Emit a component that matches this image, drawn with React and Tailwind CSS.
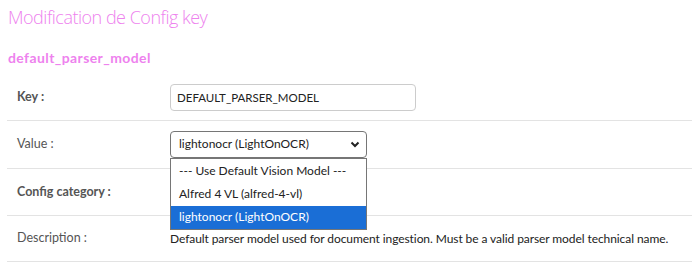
import React from 'react';

const OPTIONS = [
  '--- Use Default Vision Model ---',
  'Alfred 4 VL (alfred-4-vl)',
  'lightonocr (LightOnOCR)',
];

function Row({ label, bold, children, height }) {
  return (
    <div className="flex items-center border-b border-[#e3e3e3]" style={{ height }}>
      <div className={`w-[163px] pl-[10px] text-[12.5px] text-[#555] ${bold ? 'font-bold' : ''}`}>{label}</div>
      <div className="flex-1">{children}</div>
    </div>
  );
}

export default function App() {
  return (
    <div className="w-[692px] h-[273px] bg-white font-['Lato',sans-serif] text-[#222] overflow-hidden">
      <h1 className="pl-[8px] pt-[5px] text-[18px] font-light text-[#ee82ee] leading-[24px] font-['Open_Sans',sans-serif] tracking-[-0.5px]">
        Modification de Config key
      </h1>
      <h2 className="pl-[8px] mt-[20px] text-[14px] font-bold text-[#ee82ee] leading-[18px] tracking-[0.4px]">
        default_parser_model
      </h2>
      <div className="ml-[7px] mt-[8px]">
        <Row label="Key :" bold height={46}>
          <div className="w-[246px] h-[27px] border border-[#ccc] rounded-[4px] px-[6px] flex items-center text-[11.5px] text-[#222]">
            DEFAULT_PARSER_MODEL
          </div>
        </Row>
        <Row label="Value :" height={48}>
          <div className="relative w-[197px] -mt-[1px]">
            <div className="h-[27px] border border-[#767676] rounded-[4px] pl-[8px] pr-[6px] flex items-center justify-between text-[12px] text-[#222]">
              <span>lightonocr (LightOnOCR)</span>
              <svg width="10" height="7" viewBox="0 0 10 7">
                <path d="M1.5 1.5 L5 5 L8.5 1.5" fill="none" stroke="#222" strokeWidth="2" />
              </svg>
            </div>
            <div className="absolute left-0 top-[27px] w-[197px] bg-white border border-[#767676] z-10 text-[12px]">
              {OPTIONS.map((o, i) => (
                <div
                  key={o}
                  className={`pl-[8px] flex items-center ${i === 0 ? 'h-[24px]' : 'h-[23px]'} ${i === 2 ? 'bg-[#1a6ed6] text-white' : 'text-[#222]'}`}
                >
                  {o}
                </div>
              ))}
            </div>
          </div>
        </Row>
        <Row label="Config category :" bold height={47} />
        <Row label="Description :" height={46}>
          <div className="text-[12px] text-[#222] whitespace-nowrap tracking-[-0.08px]">
            Default parser model used for document ingestion. Must be a valid parser model technical name.
          </div>
        </Row>
      </div>
    </div>
  );
}
